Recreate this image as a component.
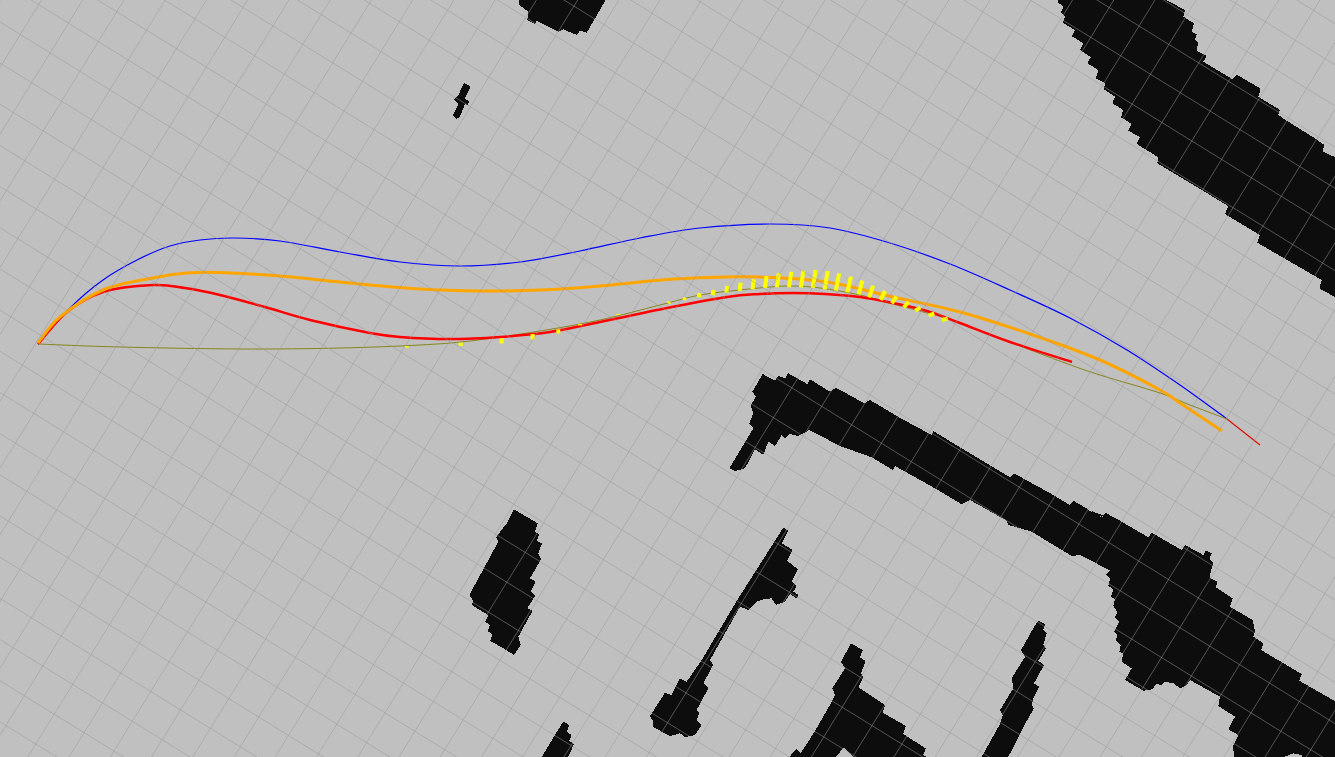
const z = (ox: number, oy: number, p: number[]) => {
  const out: string[] = [];
  for (let i = 0; i < p.length; i += 2) out.push(`${(ox + p[i] / 3).toFixed(1)},${(oy + p[i + 1] / 3).toFixed(1)}`);
  return out;
};

const band1 = z(1040, 0, [
  55,-5, 55,8, 70,20, 62,38, 75,50, 68,68, 105,90, 95,108, 130,130, 120,150, 152,172, 142,190, 175,210, 168,235, 195,250, 192,268, 225,290, 217,310, 250,330, 243,352, 275,372, 265,392, 300,412, 290,432, 355,472, 352,490, 565,618, 555,642, 660,705, 652,728, 845,840, 838,865, 900,900,
  900,478, 848,455, 853,435, 825,415, 740,362, 715,345, 720,330, 655,290, 662,266, 590,224, 578,238, 490,185, 500,168, 470,152, 475,127, 465,120, 470,103, 455,95, 462,70, 430,50, 435,30, 370,-5,
]).join(" ");

const band2 = [
  ...z(720, 360, [28,325, 100,205, 88,190, 100,160, 92,135, 108,110, 97,95, 128,42, 165,62, 175,47, 195,55, 205,40, 262,72, 270,58, 330,95, 348,83, 433,130, 450,120, 530,168, 635,225, 640,213, 720,262, 870,352, 882,340, 1000,405, 1050,435, 1060,422, 1145,472, 1158,458, 1200,485]),
  ...z(1080, 500, [20,28, 68,52, 78,40, 120,62, 205,112, 215,98, 305,150, 315,135, 370,165, 378,152, 395,160, 388,178, 400,188, 388,232, 412,245, 408,262, 458,295, 450,320, 518,360, 525,395, 520,410, 550,430, 543,450, 665,522, 658,542, 780,612, 780,780, 670,780, 665,765, 640,760, 615,770, 615,780, 465,780, 458,740, 475,705, 445,688, 465,650, 415,618, 420,590, 330,540, 320,555, 300,565, 280,550, 255,545, 245,555, 228,552, 218,568, 190,572, 135,540, 155,505, 125,485, 130,460, 118,455, 122,435, 108,420, 112,405, 102,395, 118,365, 105,352, 112,335, 100,318, 105,298, 93,290, 100,268, 85,258, 90,235, 78,225, 90,212, 45,188, 0,165]),
  ...z(720, 360, [1055,588, 1025,570, 935,515, 865,495, 860,482, 750,420, 725,433, 650,388, 525,318, 518,330, 455,292, 360,258, 268,210, 235,228, 210,222, 195,235, 185,225, 165,258, 145,245, 130,285, 105,268, 75,325, 45,333]),
].join(" ");

const island = z(440, 500, [222,28, 293,70, 285,95, 298,103, 290,122, 306,130, 295,160, 303,178, 270,235, 287,245, 272,275, 285,288, 262,325, 278,332, 235,410, 242,435, 222,465, 195,448, 150,422, 158,405, 143,393, 150,375, 135,365, 145,345, 95,315, 100,303, 88,285, 175,125, 168,112, 200,70]).join(" ");

const stick = z(440, 500, [1030,83, 1045,92, 1025,130, 1058,150, 1042,182, 1073,208, 1055,245, 1070,258, 1060,275, 1075,285, 1070,295, 1050,282, 1035,305, 1008,315, 995,295, 970,298, 950,305, 940,315, 925,330, 900,320, 810,480, 820,495, 790,550, 805,565, 770,630, 778,640, 770,660, 785,675, 765,705, 735,712, 720,700, 690,708, 665,695, 638,680, 640,665, 630,648, 675,578, 695,585, 720,535, 740,545, 785,480, 895,295]).join(" ");

const bottomSmall = z(440, 500, [370,665, 388,675, 380,695, 395,705, 388,722, 402,733, 380,780, 300,780, 345,705, 360,680]).join(" ");

const triangle = z(780, 600, [213,130, 248,150, 240,172, 257,183, 243,220, 250,232, 235,262, 315,315, 308,338, 378,378, 370,402, 437,445, 430,465, 460,480, 230,480, 192,442, 160,480, 25,480, 35,460, 50,448, 62,460, 105,393, 155,305, 165,285, 157,265, 195,205, 183,185]).join(" ");

const rightSpike = z(780, 600, [775,62, 795,72, 790,90, 800,100, 790,135, 798,145, 775,182, 792,195, 762,250, 777,260, 762,290, 755,315, 762,325, 735,372, 680,480, 600,480, 660,372, 668,345, 660,330, 700,265, 695,235, 735,170, 723,150, 760,85]).join(" ");

const topBlob = z(420, 0, [295,-5, 298,15, 325,35, 322,60, 345,72, 350,62, 415,95, 430,88, 470,105, 480,92, 500,98, 560,-5]).join(" ");

const bolt = z(420, 0, [132,250, 152,258, 135,295, 147,305, 142,315, 135,312, 120,350, 110,357, 98,347, 115,312, 103,298, 115,285]).join(" ");

const blobs = [band1, band2, island, stick, bottomSmall, triangle, rightSpike, topBlob, bolt];

const smooth = (pts: number[][]) => {
  let d = `M${pts[0][0]} ${pts[0][1]}`;
  for (let i = 0; i < pts.length - 1; i++) {
    const p0 = pts[Math.max(0, i - 1)];
    const p1 = pts[i];
    const p2 = pts[i + 1];
    const p3 = pts[Math.min(pts.length - 1, i + 2)];
    const c1x = p1[0] + (p2[0] - p0[0]) / 6;
    const c1y = p1[1] + (p2[1] - p0[1]) / 6;
    const c2x = p2[0] - (p3[0] - p1[0]) / 6;
    const c2y = p2[1] - (p3[1] - p1[1]) / 6;
    d += ` C${c1x.toFixed(1)} ${c1y.toFixed(1)} ${c2x.toFixed(1)} ${c2y.toFixed(1)} ${p2[0]} ${p2[1]}`;
  }
  return d;
};

const blue = smooth([[38,344],[70,308],[103,280],[137,260],[170,246],[200,240],[235,238],[280,241],[340,252],[400,262],[460,266],[520,262],[580,251],[640,238],[700,228],[770,224],[830,228],[890,243],[950,264],[1010,290],[1070,318],[1127,350],[1180,385],[1227,419]]);
const orange = smooth([[38,343],[60,317],[103,290],[153,278],[187,273],[220,272.5],[280,276],[350,283],[420,289],[480,291],[540,290],[600,286],[660,280],[693,278],[727,277],[760,277],[827,282],[893,297],[960,312],[1030,334],[1100,360],[1160,390],[1183,405],[1222,431]]);
const red = smooth([[38,344],[67,312],[103,292],[153,285],[185,288],[220,295],[265,307],[310,320],[370,333],[400,337],[450,339],[500,337],[550,332],[600,322],[667,308],[727,297],[760,294],[793,293],[825,294],[860,297],[893,303],[927,311],[960,323],[1010,342],[1072,362]]);
const olive = smooth([[38,344],[120,347],[240,349],[340,348],[420,345],[470,341],[540,331],[600,320],[660,305],[700,295],[740,290],[770,287],[793,286],[820,288],[860,295],[893,304],[927,313],[957,322],[1057,360],[1100,375],[1160,393],[1190,405],[1227,419]]);

const bars: number[][] = [
  [25,155,160],[72,143,150],[116,130,142],[158,120,135],[199,108,128],[239,98,123],[278,88,118],[316,78,114],[352,70,112],[389,65,112],[425,62,112],[461,60,114],[497,63,118],[531,70,122],[566,80,127],[600,92,133],[632,107,142],[667,123,150],[701,140,160],[737,156,172],[772,172,182],[813,190,197],[853,205,210],
];
const lowBars: number[][] = [
  [20,108,113],[182,98,108],[305,85,100],[398,72,88],[475,58,70],[540,42,46],[655,12,15],
];

const U = [29.85, 18.45];
const V = [-18.4, 29.8];
const O = [1139, 26];
const range = Array.from({ length: 81 }, (_, i) => i - 40);
const P = (a: number, b: number) => [O[0] + a * U[0] + b * V[0], O[1] + a * U[1] + b * V[1]];

export default function App() {
  return (
    <div className="w-[1335px] h-[757px] overflow-hidden bg-[#c0c0c0]">
      <svg className="block w-full h-full" viewBox="0 0 1335 757">
        <g fill="#0d0d0d" shapeRendering="crispEdges">
          {blobs.map((pts, i) => (
            <polygon key={i} points={pts} />
          ))}
        </g>
        <path d={blue} fill="none" stroke="#0000ff" strokeWidth="1.2" />
        <path d="M1227 419 L1260 445" fill="none" stroke="#dd1100" strokeWidth="1.2" />
        <path d={olive} fill="none" stroke="#86861c" strokeWidth="1" />
        <path d={red} fill="none" stroke="#ff0000" strokeWidth="2.5" />
        <path d={orange} fill="none" stroke="#ffa500" strokeWidth="3" />
        <g stroke="#ffff00" strokeWidth="4">
          {bars.map(([x, t, b], i) => {
            const lean = (x - 239) / 100;
            return <line key={i} x1={660 + (x + Math.max(lean, 0) * 1.2) / 3 + 1} y1={250 + t / 3} x2={660 + (x - Math.max(lean, 0) * 1.2) / 3} y2={250 + b / 3} />;
          })}
          {lowBars.map(([x, t, b], i) => (
            <line key={i} x1={400 + x / 3} y1={310 + t / 3} x2={400 + x / 3} y2={310 + b / 3} />
          ))}
        </g>
        <g stroke="#999999" strokeOpacity="0.5" strokeWidth="1">
          {range.map((a) => {
            const [x1, y1] = P(a, -40);
            const [x2, y2] = P(a, 40);
            return <line key={`a${a}`} x1={x1} y1={y1} x2={x2} y2={y2} />;
          })}
          {range.map((b) => {
            const [x1, y1] = P(-40, b);
            const [x2, y2] = P(40, b);
            return <line key={`b${b}`} x1={x1} y1={y1} x2={x2} y2={y2} />;
          })}
        </g>
      </svg>
    </div>
  );
}
